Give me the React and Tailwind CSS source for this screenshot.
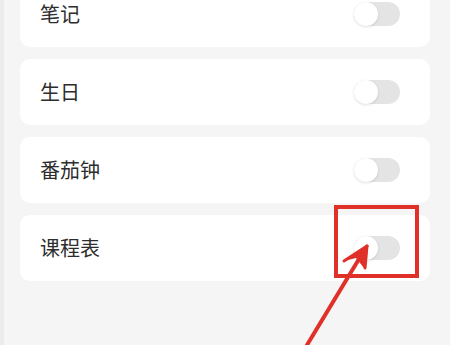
import React from "react";

function Toggle() {
  return (
    <div className="relative w-[46px] h-[24px] rounded-full bg-[#e4e4e4]">
      <div className="absolute left-0 top-0 w-[24px] h-[24px] rounded-full bg-white shadow-[0_1px_3px_rgba(0,0,0,0.12)]" />
    </div>
  );
}

function Row({ label }) {
  return (
    <div className="h-[66px] rounded-[10px] bg-white flex items-center justify-between pl-[20px] pr-[30px]">
      <span className="text-[20px] text-[#2d2d2d]">{label}</span>
      <Toggle />
    </div>
  );
}

export default function App() {
  return (
    <div
      className="relative w-[450px] h-[345px] overflow-hidden bg-[#f5f5f5] border-l-[4px] border-[#ececec]"
      style={{ fontFamily: '"Noto Sans CJK SC", "Noto Sans", sans-serif' }}
    >
      <div className="flex flex-col gap-[12px] -mt-[19px] pl-[16px] pr-[20px]">
        <Row label="笔记" />
        <Row label="生日" />
        <Row label="番茄钟" />
        <Row label="课程表" />
      </div>
      <div className="absolute left-[330px] top-[205px] w-[85px] h-[73px] border-[4px] border-[#e0302a]" />
      <svg className="absolute left-0 top-0" width="450" height="345" viewBox="0 0 450 345">
        <line x1="303" y1="345" x2="358" y2="254" stroke="#e0302a" strokeWidth="4" strokeLinecap="round" />
        <polygon points="363,246 340,261 352,258 360,268" fill="#e0302a" />
        <line x1="363" y1="246" x2="340" y2="261" stroke="#e0302a" strokeWidth="3" strokeLinecap="round" />
        <line x1="363" y1="246" x2="361" y2="268" stroke="#e0302a" strokeWidth="3" strokeLinecap="round" />
      </svg>
    </div>
  );
}
